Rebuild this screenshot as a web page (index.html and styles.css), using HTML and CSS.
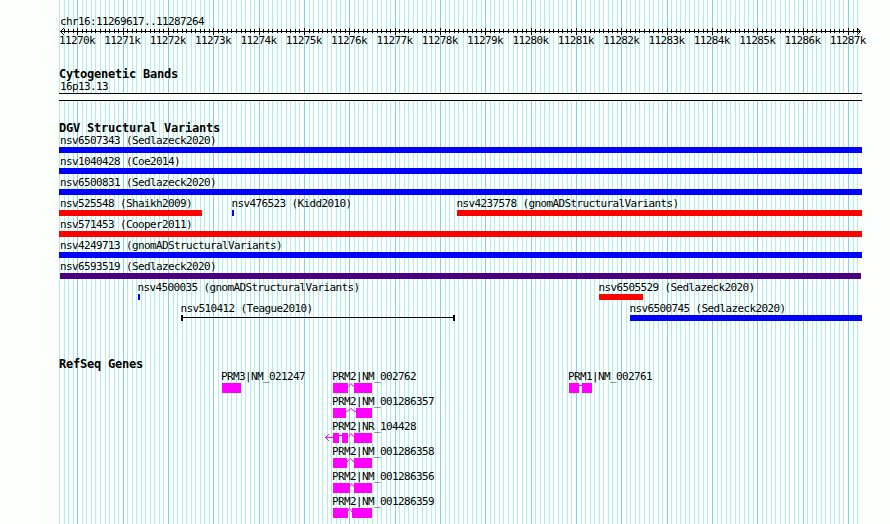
FILE: index.html
```
<!DOCTYPE html>
<html lang="en">
<head>
	<meta charset="UTF-8">
	<title>chr16:11269617..11287264</title>
	<link rel="stylesheet" href="styles.css">
</head>
<body>
	<div class="browser">
		<svg class="grid" id="grid" width="803" height="524"></svg>

		<div class="region">chr16:11269617..11287264</div>
		<svg class="ruler" id="ruler" width="803" height="8">
			<rect x="1" y="3" width="801" height="1"/>
			<path d="M5 0L1.5 3.5L5 7M798 0L801.5 3.5L798 7"/>
		</svg>
		<div class="scale">
			<span>11270k</span><span>11271k</span><span>11272k</span><span>11273k</span><span>11274k</span><span>11275k</span>
			<span>11276k</span><span>11277k</span><span>11278k</span><span>11279k</span><span>11280k</span><span>11281k</span>
			<span>11282k</span><span>11283k</span><span>11284k</span><span>11285k</span><span>11286k</span><span>11287k</span>
		</div>

		<div class="track bands">
			<h2>Cytogenetic Bands</h2>
			<div class="label">16p13.13</div>
			<div class="band"></div>
		</div>

		<div class="track variants">
			<h2>DGV Structural Variants</h2>
			<div class="row"><div class="feature full gain"><span class="label">nsv6507343 (Sedlazeck2020)</span></div></div>
			<div class="row"><div class="feature full gain"><span class="label">nsv1040428 (Coe2014)</span></div></div>
			<div class="row"><div class="feature full gain"><span class="label">nsv6500831 (Sedlazeck2020)</span></div></div>
			<div class="row">
				<div class="feature loss nsv525548"><span class="label">nsv525548 (Shaikh2009)</span></div>
				<div class="feature gain nsv476523"><span class="label">nsv476523 (Kidd2010)</span></div>
				<div class="feature loss nsv4237578"><span class="label">nsv4237578 (gnomADStructuralVariants)</span></div>
			</div>
			<div class="row"><div class="feature full loss"><span class="label">nsv571453 (Cooper2011)</span></div></div>
			<div class="row"><div class="feature full gain"><span class="label">nsv4249713 (gnomADStructuralVariants)</span></div></div>
			<div class="row"><div class="feature inversion nsv6593519"><span class="label">nsv6593519 (Sedlazeck2020)</span></div></div>
			<div class="row">
				<div class="feature gain nsv4500035"><span class="label">nsv4500035 (gnomADStructuralVariants)</span></div>
				<div class="feature loss nsv6505529"><span class="label">nsv6505529 (Sedlazeck2020)</span></div>
			</div>
			<div class="row">
				<div class="feature other nsv510412"><span class="label">nsv510412 (Teague2010)</span></div>
				<div class="feature gain nsv6500745"><span class="label">nsv6500745 (Sedlazeck2020)</span></div>
			</div>
		</div>

		<div class="track genes">
			<h2>RefSeq Genes</h2>
			<div class="row">
				<div class="gene prm3"><span class="label">PRM3|NM_021247</span>
					<svg width="19" height="10"><rect width="19" height="10"/></svg></div>
				<div class="gene prm2"><span class="label">PRM2|NM_002762</span>
					<svg width="39" height="10"><path d="M15 3.5h.5l2.5-3l2.5 3h.5"/><rect width="15" height="10"/><rect x="21" width="18" height="10"/></svg></div>
				<div class="gene prm1"><span class="label">PRM1|NM_002761</span>
					<svg width="23" height="10"><path d="M10 2.5h3"/><rect width="10" height="10"/><rect x="13" width="10" height="10"/></svg></div>
			</div>
			<div class="row"><div class="gene only"><span class="label">PRM2|NM_001286357</span>
				<svg width="39" height="10"><path d="M13 3.5h1l4-3l4 3h1"/><rect width="13" height="10"/><rect x="23" width="16" height="10"/></svg></div></div>
			<div class="row"><div class="gene only"><span class="label">PRM2|NR_104428</span>
				<svg width="39" height="10"><path d="M0 4.5h-7.5M-4 1l-3.5 3.5l3.5 3.5M6 2.5h3M15 3.5h.5l2.5-3l2.5 3h.5"/><rect width="6" height="10"/><rect x="9" width="6" height="10"/><rect x="21" width="18" height="10"/></svg></div></div>
			<div class="row"><div class="gene only"><span class="label">PRM2|NM_001286358</span>
				<svg width="39" height="10"><path d="M14 4l3.5-3.5l3.5 3.5"/><rect width="14" height="10"/><rect x="21" width="18" height="10"/></svg></div></div>
			<div class="row"><div class="gene only"><span class="label">PRM2|NM_001286356</span>
				<svg width="39" height="10"><path d="M17 3l1.5-2.5l2.5 3.5"/><rect width="17" height="10"/><rect x="21" width="18" height="10"/></svg></div></div>
			<div class="row"><div class="gene only"><span class="label">PRM2|NM_001286359</span>
				<svg width="39" height="10"><path d="M15 3l1.5-2.5l2.5 3.5"/><rect width="15" height="10"/><rect x="19" width="20" height="10"/></svg></div></div>
		</div>
	</div>
	<script src="ruler.js"></script>
</body>
</html>
```
FILE: styles.css
```
body {
	margin: 0;
	background-color: #fdfffc;
	color: #000;
	font-family: "DejaVu Sans Mono", "Liberation Mono", monospace;
	font-size: 11px;
	line-height: 15px;
	letter-spacing: -0.622px;
}
.browser {
	position: relative;
	width: 803px;
	height: 524px;
	margin-left: 59px;
	padding-top: 14px;
	box-sizing: border-box;
	white-space: nowrap;
}
svg {
	display: block;
}
rect {
	shape-rendering: crispEdges;
}
.grid {/* guide lines behind all tracks */
	position: absolute;
	left: 0;
	top: 0;
	z-index: -1;
}
.minor {
	fill: #afeeee;
}
.major {
	fill: #87ceeb;
}
.region {
	height: 14px;
	padding-left: 1px;
}
.ruler path {
	fill: none;
	stroke: #000;
}
.scale {/* one label per 1000 bp */
	display: grid;
	grid-template-columns: repeat(18, 45.35px);
	height: 15px;
	margin-top: -3px;
}
h2 {
	margin: 0;
	font-size: 12px;
	line-height: 15px;
	letter-spacing: -0.224px;
}
.bands {
	margin-top: 19px;
}
.bands h2 {
	height: 12px;
}
.bands .label {
	height: 14px;
	padding-left: 1px;
}
.band {
	height: 6px;
	border-top: 1px solid #000;
	border-bottom: 1px solid #000;
	background-color: #fdfffc;
}
.variants {
	margin-top: 20px;
}
.variants h2,
.genes h2 {
	height: 11px;
}
.row {
	display: flex;
}
.feature {/* label on top, 6px bar below */
	height: 15px;
	border-bottom: 6px solid;
	line-height: 17px;
}
.feature .label {
	color: #000;
	margin-left: -0.5px;
}
.full {
	width: 803px;
}
.feature.full .label,
.nsv525548 .label {
	margin-left: 1px;
}
.gain {
	border-color: #00f;
}
.loss {
	border-color: #f00;
}
.inversion {
	border-color: #4b0082;
}
.nsv525548 {
	width: 143px;
}
.nsv476523 {
	width: 2px;
	margin-left: 30px;
}
.nsv4237578 {
	width: 405px;
	margin-left: 223px;
}
.nsv6593519 {
	width: 801px;
	margin-left: 1px;
}
.feature.nsv525548 .label {
	margin-left: 1px;
}
.feature.nsv6593519 .label {
	margin-left: 0;
}
.nsv4500035 {
	width: 2px;
	margin-left: 79px;
}
.nsv6505529 {
	width: 44px;
	margin-left: 459px;
}
.nsv510412 {/* thin line with end caps */
	width: 274px;
	height: 21px;
	margin-left: 122px;
	border: 0;
	background:
		linear-gradient(#000, #000) 0 15px / 2px 6px no-repeat,
		linear-gradient(#000, #000) 100% 15px / 2px 6px no-repeat,
		linear-gradient(#000, #000) 0 17px / 100% 1px no-repeat;
}
.nsv6500745 {
	width: 232px;
	margin-left: 175px;
}
.genes {
	margin-top: 36px;
}
.gene .label {
	display: block;
	height: 15px;
	line-height: 17px;
	margin-left: -1px;
}
.gene svg {
	overflow: visible;
	fill: #f0f;
}
.gene path {
	fill: none;
	stroke: #f0f;
}
.prm3 {
	width: 19px;
	margin-left: 163px;
}
.prm2 {
	width: 39px;
	margin-left: 92px;
}
.prm1 {
	width: 23px;
	margin-left: 197px;
}
.only {
	width: 39px;
	margin-left: 274px;
}
```
FILE: ruler.js
```
var start = 11269617;
var end = 11287264;
var scale = 800 / (end - start);

function addRect(parent, x, y, height, name){
	var rect = document.createElementNS("http://www.w3.org/2000/svg", "rect");
	rect.setAttribute("x", x);
	rect.setAttribute("y", y);
	rect.setAttribute("width", 1);
	rect.setAttribute("height", height);
	if(name){
		rect.setAttribute("class", name);
	}
	parent.appendChild(rect);
}

var grid = document.getElementById("grid");
var ruler = document.getElementById("ruler");
// a line every 100 bp, a stronger one every 1000 bp
for(var bp = 11269600; bp <= end; bp += 100){
	var x = Math.round((bp - start) * scale + 1);
	var major = bp % 1000 === 0;
	addRect(grid, x, 0, 524, major ? "major" : "minor");
	if(bp > start){
		addRect(ruler, x, major ? 0 : 1, major ? 7 : 4, "");
	}
}
```
